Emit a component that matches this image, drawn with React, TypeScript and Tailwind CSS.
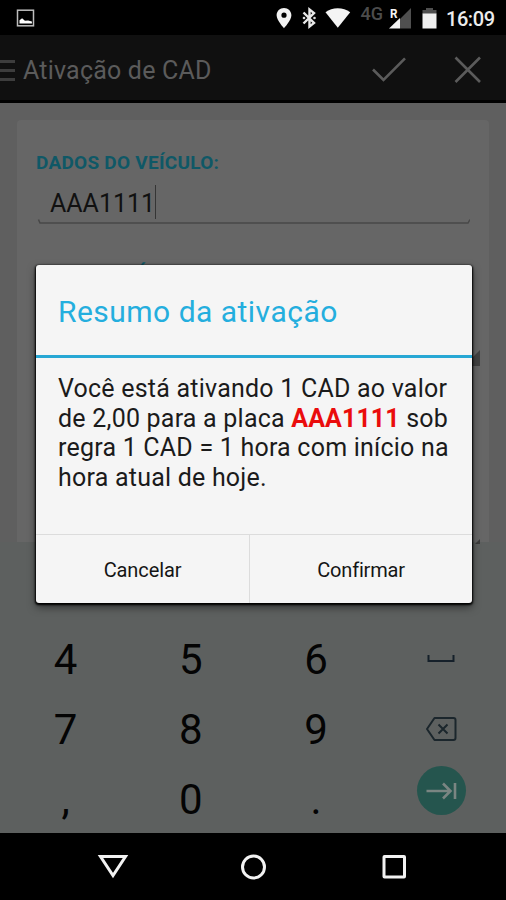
import React from 'react';

const StatusBar: React.FC = () => (
  <div className="flex h-[35px] shrink-0 bg-black">
    <svg width="506" height="35" viewBox="0 0 506 35">
      {/* picture notification */}
      <rect x="17.5" y="10.2" width="16" height="15.6" fill="none" stroke="#bdbdbd" strokeWidth="1.5" />
      <path d="M19.5 23.5v-3.2l2.6-2 2.8 2.4 3.2-.2 3.8 1v2z" fill="#fff" />
      {/* location */}
      <path
        d="M284 8c-4.2 0-7.4 3.2-7.4 7.3 0 5 7.4 12.9 7.4 12.9s7.4-7.9 7.4-12.9c0-4.1-3.2-7.3-7.4-7.3zm0 4.6a2.6 2.6 0 1 1 0 5.2 2.6 2.6 0 0 1 0-5.2z"
        fill="#f2f2f2"
      />
      {/* bluetooth */}
      <path d="M303.5 12.5l10.5 10.5-4.5 3.6V9.4l4.5 3.6-10.5 10.5" fill="none" stroke="#e8e8e8" strokeWidth="2.4" />
      <circle cx="304" cy="18" r="1.3" fill="#ddd" />
      <circle cx="314.5" cy="18" r="1.3" fill="#ddd" />
      {/* wifi */}
      <path d="M325.5 12.3c3.5-2.8 7.6-4 12.2-4s9 1.2 12.5 4L337.8 27.8z" fill="#f4f4f4" />
      <text x="360.5" y="19.5" fontSize="18" fontWeight="500" fill="#4c4c4c" fontFamily="Roboto, sans-serif">4G</text>
      {/* signal */}
      <path d="M411 8v20.5h-11V19z" fill="#4f4f4f" />
      <path d="M400 18v10.5h-11z" fill="#f4f4f4" />
      <text
        x="390"
        y="18"
        fontSize="12.5"
        fontWeight="700"
        fill="#f4f4f4"
        stroke="#000"
        strokeWidth="2"
        paintOrder="stroke"
        fontFamily="Roboto, sans-serif"
        textLength="7.5"
        lengthAdjust="spacingAndGlyphs"
      >
        R
      </text>
      {/* battery */}
      <path d="M426 8h7v2h3.5v4h-14v-4h3.5z" fill="#4f4f4f" />
      <path d="M422.5 13.5h14v15h-14z" fill="#f0f0f0" />
      <text x="446" y="26" fontSize="20" fontWeight="500" fill="#ececec" fontFamily="Roboto, sans-serif" textLength="49">16:09</text>
    </svg>
  </div>
);

const ActionBar: React.FC = () => (
  <div className="flex h-[68px] shrink-0 items-center border-b-[3px] border-black bg-[#101010]">
    <div className="flex w-[15px] flex-col gap-[6px] pt-[6px]">
      <div className="h-[3px] bg-[#3d3d3d]" />
      <div className="h-[3px] bg-[#3d3d3d]" />
      <div className="h-[3px] bg-[#3d3d3d]" />
    </div>
    <h1 className="ml-2 grow whitespace-nowrap pt-[7px] text-[25px] tracking-[0.2px] text-[#5b5b5b]">Ativação de CAD</h1>
    <svg width="136" height="65" viewBox="370 35 136 65" fill="none" stroke="#5b5b5b" strokeWidth="2.6">
      <path d="M373 69.5L383.5 80 405 58.3" />
      <path d="M455.5 57.5L480 82M480 57.5L455.5 82" />
    </svg>
  </div>
);

const VehicleForm: React.FC = () => (
  <div className="flex h-[439px] shrink-0 bg-[#5f5f5f] px-[17px] pt-[17px]">
    <div className="flex grow flex-col rounded-t-sm bg-[#666666] pl-[19px] pr-[19px] pt-[31px]">
      <h2 className="h-[24px] text-[19px] font-bold leading-[24px] tracking-[0.26px] text-[#0f5866]">DADOS DO VEÍCULO:</h2>
      <div className="mx-[2px] mt-[8px] flex h-[45px] items-start">
        <span className="pl-[12px] pt-[4px] text-[25px] leading-[34px] text-[#111]">AAA1111</span>
        <span className="mt-[2px] h-[34px] w-px bg-[#353535]" />
      </div>
      <svg className="-mt-[2px] shrink-0" width="434" height="6" viewBox="0 0 434 6">
        <path d="M2.5 0.5l1.5 3.5H432l2-3.5" fill="none" stroke="#484848" strokeWidth="1.5" />
      </svg>
      <h2 className="mt-[36px] h-[24px] text-[19px] font-bold leading-[24px] tracking-[0.26px] text-[#0f5866]">TIPO DO VEÍCULO:</h2>
      {/* spinner corners */}
      <svg className="ml-auto mt-[63px] mr-[-10px] shrink-0" width="20" height="20" viewBox="0 0 20 20">
        <path d="M20 2v16H4z" fill="#424242" />
      </svg>
      <svg className="relative z-10 ml-auto mt-[166px] mr-[-10px] shrink-0" width="14" height="12" viewBox="0 0 14 12">
        <path d="M14 5v5H9z" fill="#3c3c3c" />
      </svg>
    </div>
  </div>
);

const SpaceIcon: React.FC = () => (
  <svg width="28" height="10" viewBox="0 0 28 10">
    <path d="M1.5 1v6h25V1" fill="none" stroke="#15202a" strokeWidth="2" />
  </svg>
);

const BackspaceIcon: React.FC = () => (
  <svg width="32" height="26" viewBox="0 0 32 26" fill="none" stroke="#1b262c" strokeWidth="2">
    <path d="M9.5 2h19q2 0 2 2v18q0 2-2 2h-19L2 13z" strokeLinejoin="round" />
    <path d="M13.5 8.5l9 9M22.5 8.5l-9 9" />
  </svg>
);

const keyClass = 'flex items-center justify-center pt-[2px] text-[42px] leading-none text-[#040404]';
const iconKeyClass = 'flex items-center justify-center';

const Keyboard: React.FC = () => (
  <div className="h-[291px] shrink-0 bg-[#5d605f] pl-[3px] pt-[82px]">
    <div className="grid w-[501px] auto-rows-[70px] grid-cols-4">
      <div className={keyClass}>4</div>
      <div className={keyClass}>5</div>
      <div className={keyClass}>6</div>
      <div className={iconKeyClass}><SpaceIcon /></div>
      <div className={keyClass}>7</div>
      <div className={keyClass}>8</div>
      <div className={keyClass}>9</div>
      <div className={iconKeyClass}><BackspaceIcon /></div>
      <div className={keyClass}>,</div>
      <div className={keyClass}>0</div>
      <div className={keyClass}>.</div>
      <div className="flex justify-center">
        <div className="mt-[2px] flex size-[49px] items-center justify-center rounded-full bg-[#25554e]">
          <svg width="32" height="20" viewBox="0 0 32 20" fill="none" stroke="#7a8582" strokeWidth="2.6">
            <path d="M1.5 10h24M18 2.5l7.5 7.5-7.5 7.5M30 2v16" />
          </svg>
        </div>
      </div>
    </div>
  </div>
);

const NavBar: React.FC = () => (
  <div className="flex h-[67px] shrink-0 bg-black">
    <svg width="506" height="67" viewBox="0 833 506 67" fill="none" stroke="#f2f2f2" strokeWidth="3">
      <path d="M100.5 856.5h25L113 875.5z" />
      <circle cx="253.5" cy="867" r="11" />
      <rect x="384" y="856.5" width="20.5" height="20.5" rx="0.5" />
    </svg>
  </div>
);

const ActivationDialog: React.FC = () => (
  <div className="absolute left-[36px] top-[265px] z-20 flex h-[338px] w-[436px] flex-col overflow-hidden rounded-[3px] bg-[#f5f5f5] shadow-[0_1px_2px_1px_#000,0_4px_8px_rgba(0,0,0,0.5)]">
    <h2 className="flex h-[93px] shrink-0 items-center border-b-[3px] border-[#27a7d4] pl-[22px] pt-[3px] text-[30px] tracking-[0.48px] text-[#24aede]">
      Resumo da ativação
    </h2>
    <p className="h-[177px] shrink-0 whitespace-nowrap border-b border-[#dcdcdc] pl-[22px] pt-[16px] text-[25px] leading-[29.7px] tracking-[0.22px] text-[#1b1b1b]">
      Você está ativando 1 CAD ao valor
      <br />
      de 2,00 para a placa <b className="tracking-[0.1px] text-[#ea0c0c]">AAA1111</b> sob
      <br />
      regra 1 CAD = 1 hora com início na
      <br />
      hora atual de hoje.
    </p>
    <div className="flex grow text-[20px] text-[#151515]">
      <button className="w-[214px] border-r border-[#dcdcdc] pt-px tracking-[-0.1px]">Cancelar</button>
      <button className="grow pt-px tracking-[-0.2px]">Confirmar</button>
    </div>
  </div>
);

const App: React.FC = () => {
  return (
    <div className="relative flex h-[900px] w-[506px] flex-col overflow-hidden bg-black font-[Roboto,sans-serif]">
      <StatusBar />
      <ActionBar />
      <VehicleForm />
      <Keyboard />
      <NavBar />
      <ActivationDialog />
    </div>
  );
};

export default App;
